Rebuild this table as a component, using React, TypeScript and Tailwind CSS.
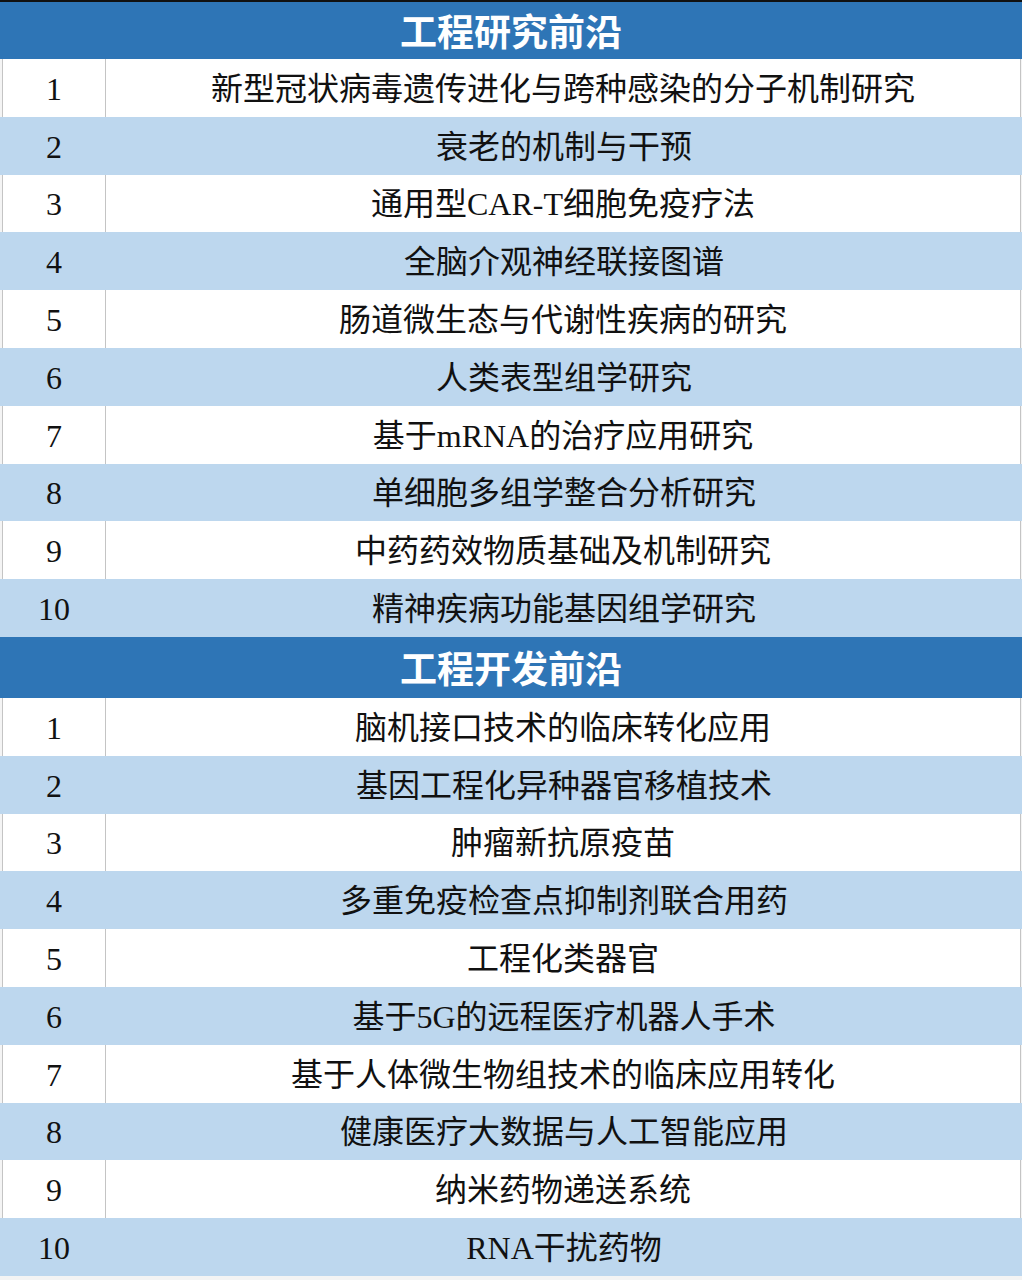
const research = [
  '新型冠状病毒遗传进化与跨种感染的分子机制研究',
  '衰老的机制与干预',
  '通用型CAR-T细胞免疫疗法',
  '全脑介观神经联接图谱',
  '肠道微生态与代谢性疾病的研究',
  '人类表型组学研究',
  '基于mRNA的治疗应用研究',
  '单细胞多组学整合分析研究',
  '中药药效物质基础及机制研究',
  '精神疾病功能基因组学研究',
]

const development = [
  '脑机接口技术的临床转化应用',
  '基因工程化异种器官移植技术',
  '肿瘤新抗原疫苗',
  '多重免疫检查点抑制剂联合用药',
  '工程化类器官',
  '基于5G的远程医疗机器人手术',
  '基于人体微生物组技术的临床应用转化',
  '健康医疗大数据与人工智能应用',
  '纳米药物递送系统',
  'RNA干扰药物',
]

function Header({ title, tall }: { title: string; tall?: boolean }) {
  return (
    <div
      className={`flex items-center justify-center bg-[#2e75b6] text-white font-bold text-[37px] leading-none ${
        tall ? 'h-[61px]' : 'h-[57px]'
      }`}
      style={{ fontFamily: '"Noto Sans CJK SC", sans-serif' }}
    >
      {title}
    </div>
  )
}

function Row({ n, text }: { n: number; text: string }) {
  const shaded = n % 2 === 0
  return (
    <div
      className={`flex h-[57.8px] text-[#111] ${
        shaded ? 'bg-[#bdd7ee]' : 'bg-white border-l border-r border-[#c4c4c4] ml-[2px] mr-[1px]'
      }`}
    >
      <div
        className={`flex items-center justify-center text-[32px] leading-none pt-[2px] ${
          shaded ? 'w-[106px] pl-[2px]' : 'w-[103px] border-r border-[#c4c4c4]'
        }`}
        style={{ fontFamily: '"Liberation Serif", serif' }}
      >
        {n}
      </div>
      <div
        className="flex flex-1 items-center justify-center text-[32px] leading-none pt-[2px]"
        style={{ fontFamily: '"Liberation Serif", "Noto Sans CJK SC", serif' }}
      >
        {text}
      </div>
    </div>
  )
}

export default function App() {
  return (
    <div className="w-[1022px] h-[1280px] bg-[#f4f4f4] overflow-hidden">
      <div className="h-[2px] bg-[#111]" />
      <Header title="工程研究前沿" />
      {research.map((t, i) => (
        <Row key={t} n={i + 1} text={t} />
      ))}
      <Header title="工程开发前沿" tall />
      {development.map((t, i) => (
        <Row key={t} n={i + 1} text={t} />
      ))}
    </div>
  )
}
